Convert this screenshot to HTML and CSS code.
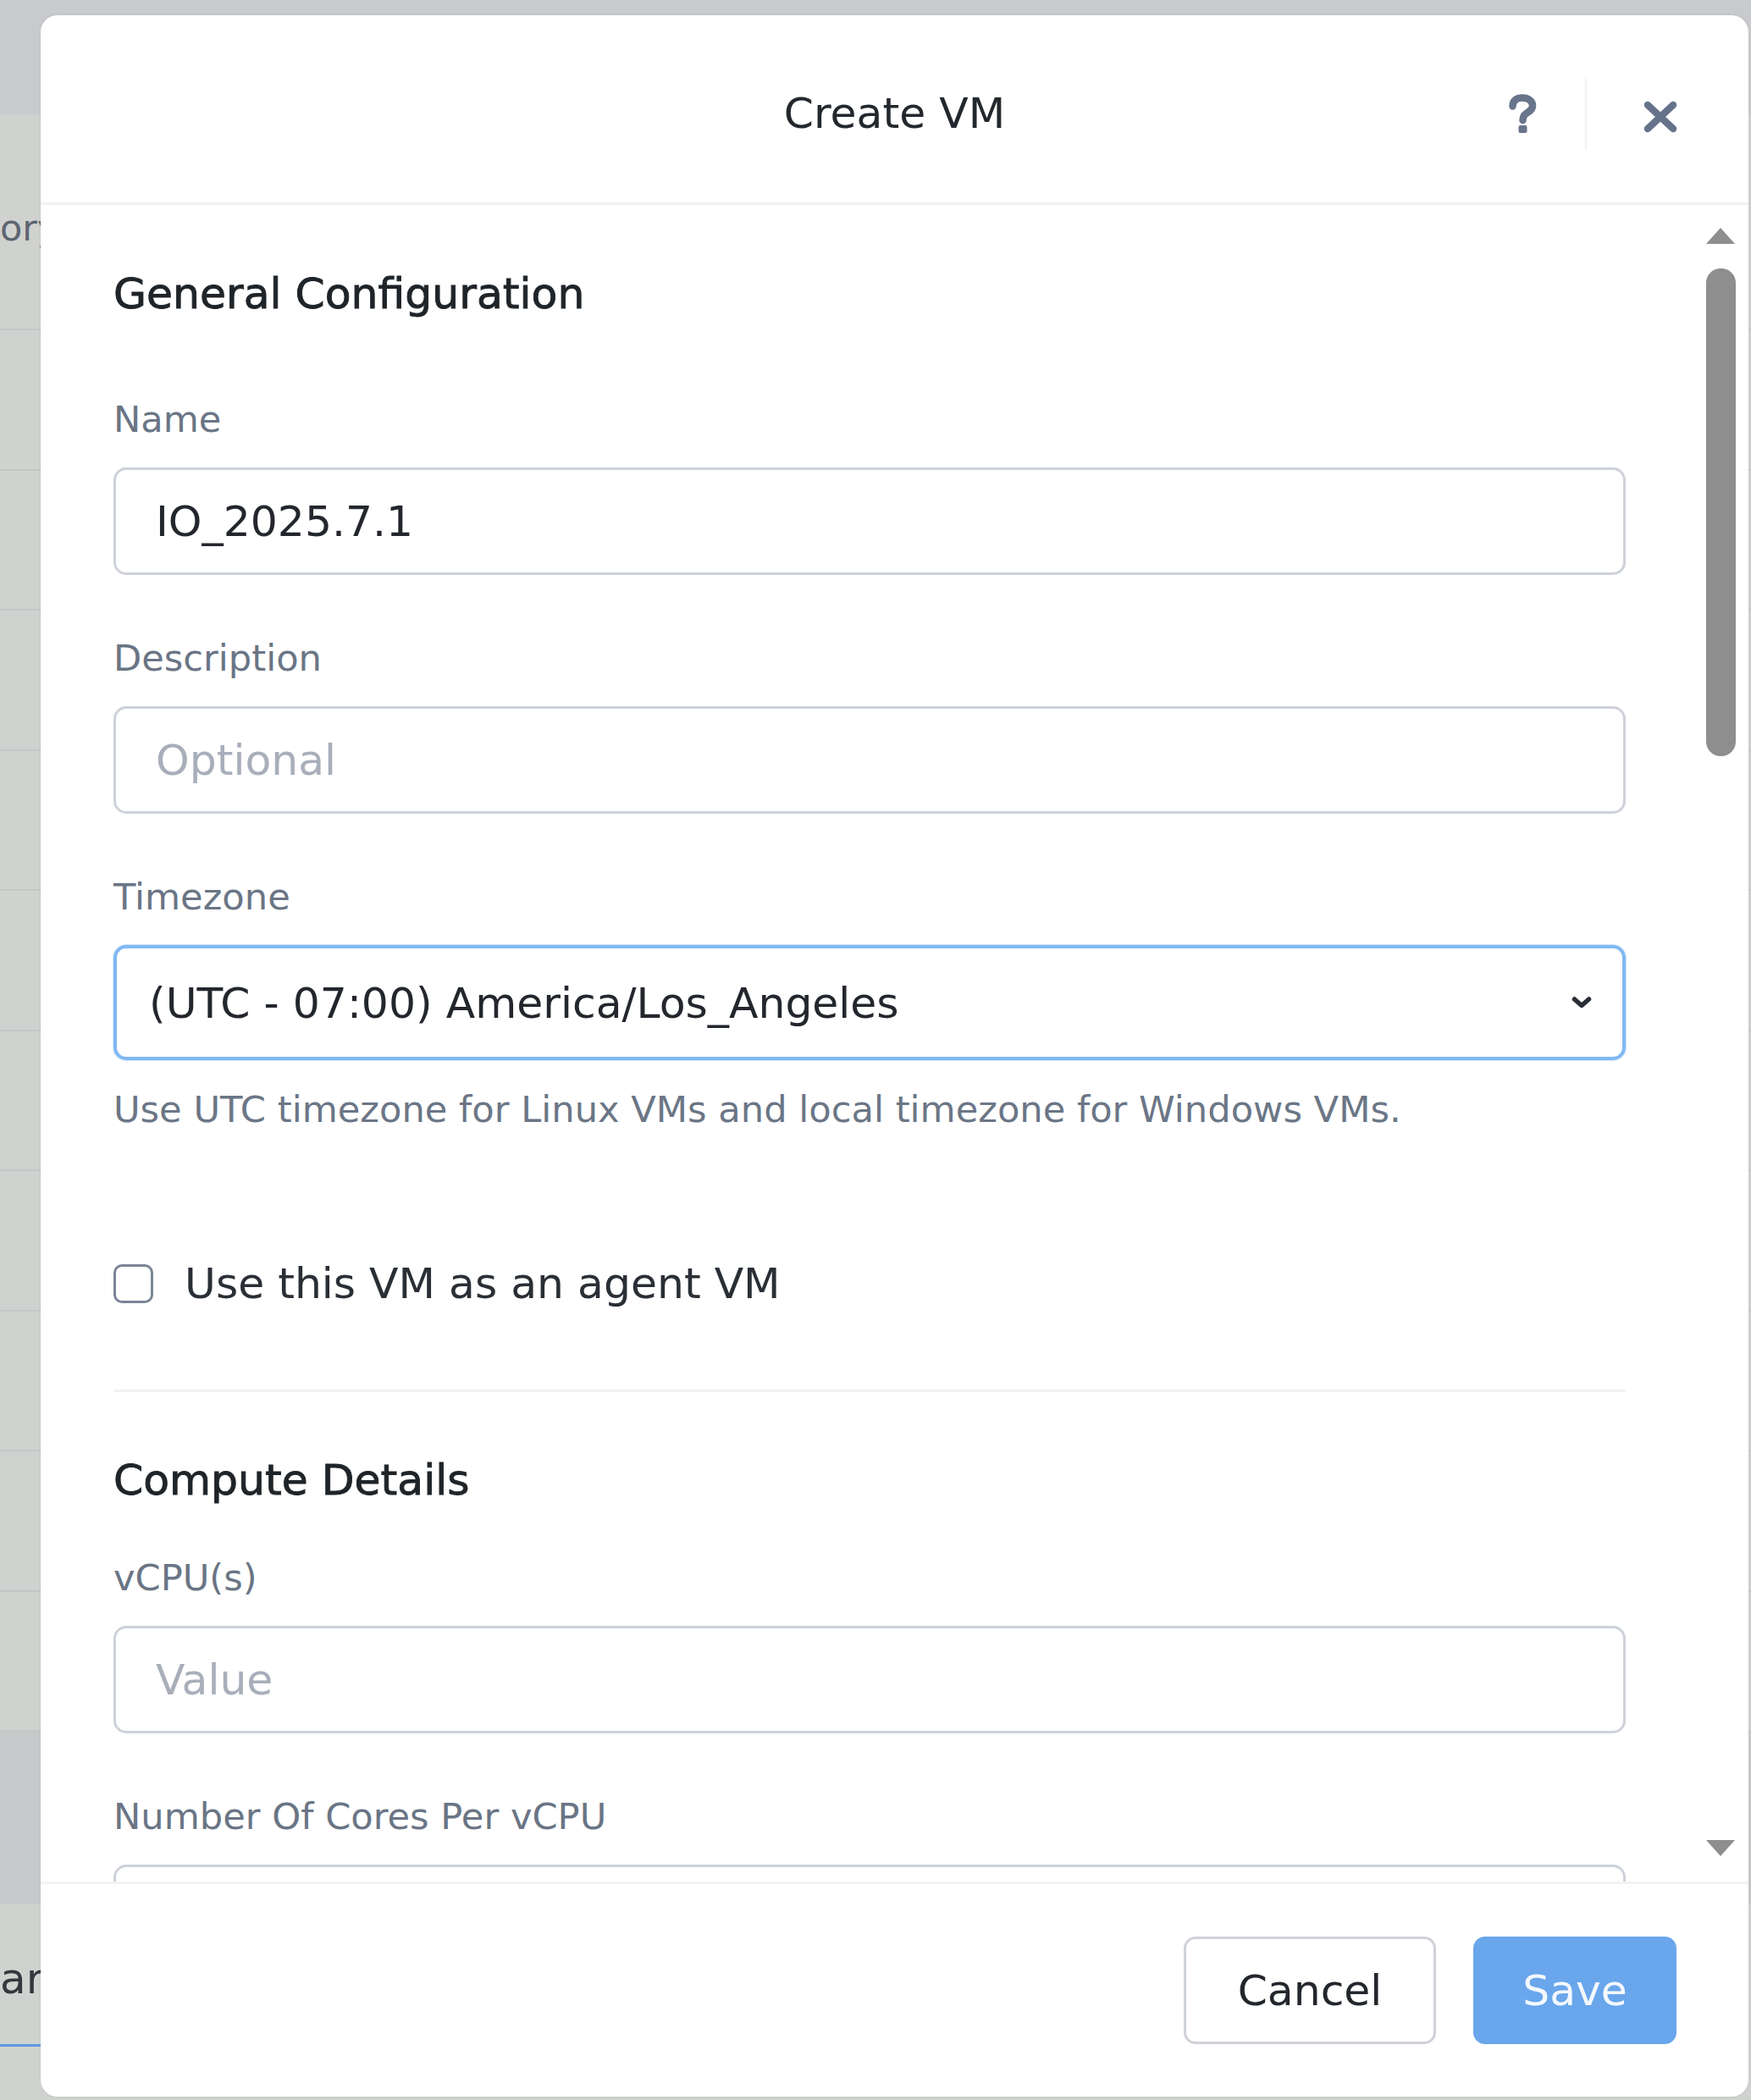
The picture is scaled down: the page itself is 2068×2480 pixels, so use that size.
FILE: index.html
```html
<!DOCTYPE html>
<html lang="en">
<head>
<meta charset="utf-8">
<title>Create VM</title>
<link rel="stylesheet" href="styles.css">
</head>
<body>
<div class="page">
  <div class="bg">
    <div class="bg-top"></div>
    <div class="bg-head-row"><span class="bg-label">ory</span></div>
    <div class="bg-row"></div>
    <div class="bg-row"></div>
    <div class="bg-row"></div>
    <div class="bg-row"></div>
    <div class="bg-row"></div>
    <div class="bg-row"></div>
    <div class="bg-row"></div>
    <div class="bg-row"></div>
    <div class="bg-row"></div>
    <div class="bg-row"></div>
    <div class="bg-band"></div>
    <div class="bg-tabs"><span class="bg-tab">ar</span></div>
  </div>

  <div class="modal" role="dialog" aria-label="Create VM">
    <header class="modal-header">
      <div class="header-spacer"></div>
      <h1 class="modal-title">Create VM</h1>
      <div class="header-actions">
        <button class="icon-btn help-btn" aria-label="Help">
          <svg width="36" height="46" viewBox="0 0 36 46"><path d="M6.5 14.5 C6.5 7.5 11.5 4.5 18 4.5 C25 4.5 30 8.5 30 13.5 C30 18.5 26.5 20.5 22.5 23 C19.8 24.8 18.5 26.5 18.5 31" fill="none" stroke="#68758a" stroke-width="8.5" stroke-linecap="round"/><rect x="13.5" y="37" width="10" height="9" rx="2" fill="#68758a"/></svg>
        </button>
        <span class="header-sep"></span>
        <button class="icon-btn close-btn" aria-label="Close">
          <svg width="42" height="38" viewBox="0 0 42 38"><path d="M6 5 L36 33 M36 5 L6 33" stroke="#65728a" stroke-width="8.5" stroke-linecap="round"/></svg>
        </button>
      </div>
    </header>

    <div class="modal-body">
      <div class="form">
        <h2 class="section-title">General Configuration</h2>

        <div class="field field-first">
          <div class="field-label">Name</div>
          <input class="text-input" type="text" value="IO_2025.7.1">
        </div>

        <div class="field">
          <div class="field-label">Description</div>
          <input class="text-input" type="text" placeholder="Optional">
        </div>

        <div class="field">
          <div class="field-label">Timezone</div>
          <div class="select" role="combobox" aria-expanded="false">
            <span class="select-value">(UTC - 07:00) America/Los_Angeles</span>
            <svg class="chevron" width="26" height="16" viewBox="0 0 26 16"><path d="M4.5 4 L13 11.5 L21.5 4" fill="none" stroke="#2a2f37" stroke-width="5.5" stroke-linecap="round" stroke-linejoin="round"/></svg>
          </div>
          <div class="helper">Use UTC timezone for Linux VMs and local timezone for Windows VMs.</div>
        </div>

        <label class="check-row">
          <span class="checkbox"></span>
          <span class="check-label">Use this VM as an agent VM</span>
        </label>

        <div class="divider"></div>

        <h2 class="section-title section-compute">Compute Details</h2>

        <div class="field field-compute">
          <div class="field-label">vCPU(s)</div>
          <input class="text-input" type="text" placeholder="Value">
        </div>

        <div class="field">
          <div class="field-label">Number Of Cores Per vCPU</div>
          <input class="text-input" type="text">
        </div>
      </div>

      <div class="scrollbar" aria-hidden="true">
        <svg class="scroll-arrow" width="36" height="21" viewBox="0 0 36 21"><path d="M18 1 L35 20 L1 20 Z" fill="#8e8e8e"/></svg>
        <div class="scroll-thumb"></div>
        <div class="scroll-spacer"></div>
        <svg class="scroll-arrow" width="36" height="21" viewBox="0 0 36 21"><path d="M1 1 L35 1 L18 20 Z" fill="#8e8e8e"/></svg>
      </div>
    </div>

    <footer class="modal-footer">
      <button class="btn btn-cancel">Cancel</button>
      <button class="btn btn-save">Save</button>
    </footer>
  </div>
</div>
</body>
</html>
```

FILE: styles.css
```css
* {
  box-sizing: border-box;
}

html, body {
  margin: 0;
  padding: 0;
}

body {
  width: 2068px;
  height: 2480px;
  overflow: hidden;
  font-family: "DejaVu Sans", "Liberation Sans", sans-serif;
  background: #d0d2cf;
}

.page {
  position: relative;
  width: 2068px;
  height: 2480px;
  overflow: hidden;
}

/* ---------- background page ---------- */
.bg {
  display: flex;
  flex-direction: column;
  width: 100%;
  height: 100%;
}

.bg-top {
  height: 135px;
  background: #c9cacd;
  flex: none;
}

.bg-head-row {
  height: 255px;
  flex: none;
  border-bottom: 2px solid #c4c7c7;
  display: flex;
  align-items: center;
  padding-top: 14px;
  white-space: nowrap;
}

.bg-label {
  font-size: 43px;
  color: #5d6571;
}

.bg-row {
  height: 165.5px;
  flex: none;
  border-bottom: 2px solid #c4c7c7;
}

.bg-band {
  height: 203px;
  flex: none;
  background: #c7c9ca;
}

.bg-tabs {
  flex: 1;
  display: flex;
  align-items: flex-start;
  padding-top: 39px;
  white-space: nowrap;
}

.bg-tab {
  font-size: 50px;
  line-height: 100px;
  color: #34383d;
  border-bottom: 3px solid #5d9be0;
  padding-bottom: 27px;
  padding-right: 60px;
}

/* ---------- modal ---------- */
.modal {
  position: absolute;
  left: 48px;
  top: 18px;
  width: 2017px;
  height: 2458px;
  background: #ffffff;
  border-radius: 20px;
  overflow: hidden;
  display: flex;
  flex-direction: column;
  box-shadow: 0 0 4px rgba(0, 0, 0, 0.06);
}

.modal-header {
  height: 224px;
  flex: none;
  padding-top: 11px;
  border-bottom: 3px solid #f0f2ef;
  display: grid;
  grid-template-columns: 1fr auto 1fr;
  align-items: center;
}

.modal-title {
  margin: 0;
  font-size: 50.4px;
  font-weight: normal;
  line-height: 1.2;
  color: #23282e;
}

.header-actions {
  justify-self: end;
  display: flex;
  align-items: center;
  padding-right: 17px;
}

.icon-btn {
  border: none;
  background: none;
  padding: 0;
  margin: 0;
  height: 100px;
  display: flex;
  align-items: center;
  justify-content: center;
}

.help-btn {
  width: 148px;
}

.close-btn {
  width: 174px;
  padding-top: 8px;
}

.header-sep {
  width: 2px;
  height: 86px;
  background: #f1f2f1;
}

/* ---------- body ---------- */
.modal-body {
  flex: 1;
  min-height: 0;
  display: flex;
}

.form {
  flex: 1;
  min-width: 0;
  overflow: hidden;
  padding: 75px 93px 0 86px;
}

.section-title {
  margin: 0;
  font-size: 50.4px;
  font-weight: normal;
  line-height: 60px;
  color: #1f2429;
  -webkit-text-stroke: 0.9px #1f2429;
}

.section-compute {
  margin-top: 74px;
}

.field {
  margin-top: 72px;
}

.field-first {
  margin-top: 92px;
}

.field-compute {
  margin-top: 59px;
}

.field-label {
  font-size: 43.2px;
  line-height: 52px;
  color: #6a7585;
  margin-bottom: 31px;
}

.text-input {
  display: block;
  width: 100%;
  height: 127px;
  margin: 0;
  border: 3px solid #cdd1d9;
  border-radius: 15px;
  padding: 0 47px;
  font-family: "DejaVu Sans", "Liberation Sans", sans-serif;
  font-size: 50.4px;
  color: #23272d;
  background: #ffffff;
  outline: none;
}

.text-input::placeholder {
  color: #a8afba;
}

.select {
  height: 136px;
  border: 4px solid #80b8f2;
  border-radius: 15px;
  box-shadow: 0 0 0 1px rgba(128, 184, 242, 0.35);
  padding: 0 35px 0 38px;
  display: flex;
  align-items: center;
  justify-content: space-between;
}

.select-value {
  font-size: 50.4px;
  color: #23272d;
}

.chevron {
  flex: none;
}

.helper {
  margin-top: 32px;
  font-size: 43.2px;
  line-height: 52px;
  color: #6b7686;
}

.check-row {
  margin-top: 150px;
  height: 60px;
  display: flex;
  align-items: center;
  gap: 37px;
}

.checkbox {
  width: 47px;
  height: 46px;
  border: 3.5px solid #7b8696;
  border-radius: 10px;
  flex: none;
}

.check-label {
  font-size: 50.4px;
  line-height: 60px;
  color: #2a2f36;
}

.divider {
  margin-top: 95px;
  height: 3px;
  background: #f0f2ef;
}

/* ---------- scrollbar ---------- */
.scrollbar {
  width: 38px;
  margin-right: 14px;
  flex: none;
  display: flex;
  flex-direction: column;
  align-items: center;
  padding: 26px 0 29px;
}

.scroll-arrow {
  flex: none;
}

.scroll-thumb {
  width: 35px;
  height: 576px;
  margin-top: 28px;
  border-radius: 17px;
  background: #8e8e8e;
  flex: none;
}

.scroll-spacer {
  flex: 1;
}

/* ---------- footer ---------- */
.modal-footer {
  height: 254px;
  flex: none;
  border-top: 3px solid #f2f3f0;
  display: flex;
  justify-content: flex-end;
  align-items: center;
  gap: 44px;
  padding-right: 85px;
}

.btn {
  height: 127px;
  border-radius: 14px;
  font-family: "DejaVu Sans", "Liberation Sans", sans-serif;
  font-size: 50.4px;
  padding: 0;
  margin: 0;
}

.btn-cancel {
  width: 298px;
  border: 3px solid #cfd2d9;
  background: #ffffff;
  color: #23272d;
}

.btn-save {
  width: 240px;
  border: none;
  background: #69a6eb;
  color: #f4f8fe;
}
```
